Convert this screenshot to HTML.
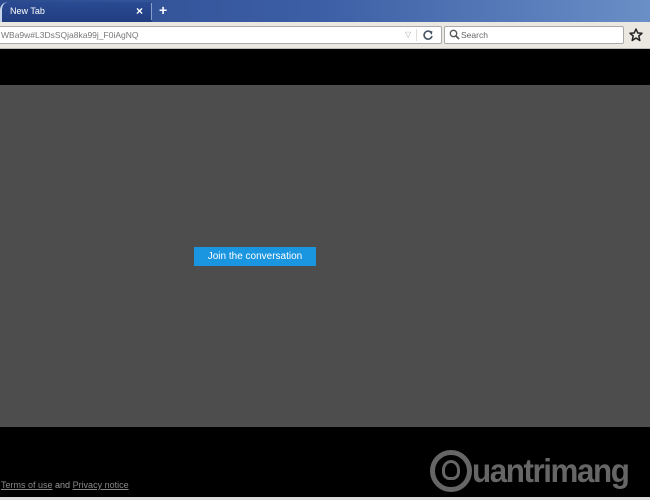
<!DOCTYPE html><html><head><style>
body{margin:0;width:650px;height:500px;overflow:hidden;position:relative;font-family:"Liberation Sans",sans-serif;background:#000}
div{position:absolute;box-sizing:border-box}
</style></head><body>
<div style="left:0;top:0;width:650px;height:22px;background:linear-gradient(90deg,#2c4b8f,#3d5fa6 50%,#6a8fc6)"></div>
<div style="left:0;top:2px;width:152px;height:20px;background:linear-gradient(#2a4a92,#213d80);border-radius:8px 0 0 0;border-left:2px solid #c8d4ea"></div>
<div style="left:10px;top:6px;color:#fff;font-size:9px">New Tab</div>
<div style="left:136px;top:4px;color:#fff;font-size:12px;font-weight:bold">×</div>
<div style="left:151px;top:3px;width:1px;height:17px;background:#8aa0cc"></div>
<div style="left:159px;top:2px;color:#fff;font-size:14px;font-weight:bold">+</div>
<div style="left:0;top:22px;width:650px;height:27px;background:#ebe8e2;border-bottom:1px solid #bbb"></div>
<div style="left:-2px;top:26px;width:444px;height:18px;background:#fff;border:1px solid #aaa;border-radius:2px"></div>
<div style="left:1px;top:30px;color:#777;font-size:8.5px">WBa9w#L3DsSQja8ka99j_F0iAgNQ</div>
<div style="left:405px;top:30px;color:#aaa;font-size:8px">▽</div>
<div style="left:416px;top:29px;width:1px;height:12px;background:#ddd"></div>
<svg style="position:absolute;left:422px;top:29px" width="12" height="12" viewBox="0 0 12 12"><path d="M9.5 4A4 4 0 1 0 10 7" fill="none" stroke="#456" stroke-width="1.6"/><path d="M7 1.5L10.5 2.5 9.5 6z" fill="#456"/></svg>
<div style="left:444px;top:26px;width:180px;height:18px;background:#fff;border:1px solid #aaa;border-radius:2px"></div>
<svg style="position:absolute;left:449px;top:29px" width="11" height="11" viewBox="0 0 11 11"><circle cx="4.5" cy="4.5" r="3.2" fill="none" stroke="#555" stroke-width="1.3"/><path d="M7 7L10 10" stroke="#555" stroke-width="1.6"/></svg>
<div style="left:461px;top:30px;color:#666;font-size:8.5px">Search</div>
<svg style="position:absolute;left:629px;top:28px" width="14" height="14" viewBox="0 0 14 14"><path d="M7 1L8.8 5 13 5.3 9.8 8 10.8 12.5 7 10 3.2 12.5 4.2 8 1 5.3 5.2 5z" fill="none" stroke="#222" stroke-width="1.5" stroke-linejoin="round"/></svg>
<div style="left:0;top:85px;width:650px;height:342px;background:#4d4d4d"></div>
<div style="left:194px;top:247px;width:122px;height:19px;background:#1a95e0;color:#fff;font-size:10px;text-align:center;line-height:19px">Join the conversation</div>
<div style="left:1px;top:480px;color:#999;font-size:9px"><span style="text-decoration:underline;color:#888">Terms of use</span> and <span style="text-decoration:underline;color:#888">Privacy notice</span></div>
<div style="left:430px;top:450px;width:42px;height:42px;border:5px solid #666;border-radius:50%"></div>
<div style="left:442px;top:460px;width:18px;height:20px;border:3px solid #666;border-radius:50% 50% 40% 40%"></div>
<div style="left:472px;top:452px;color:#666;font-size:33px;font-weight:bold;letter-spacing:-1.5px;transform:scaleX(0.95);transform-origin:left">uantrimang</div>
<div style="left:0;top:497px;width:650px;height:3px;background:#ddd"></div>
</body></html>
